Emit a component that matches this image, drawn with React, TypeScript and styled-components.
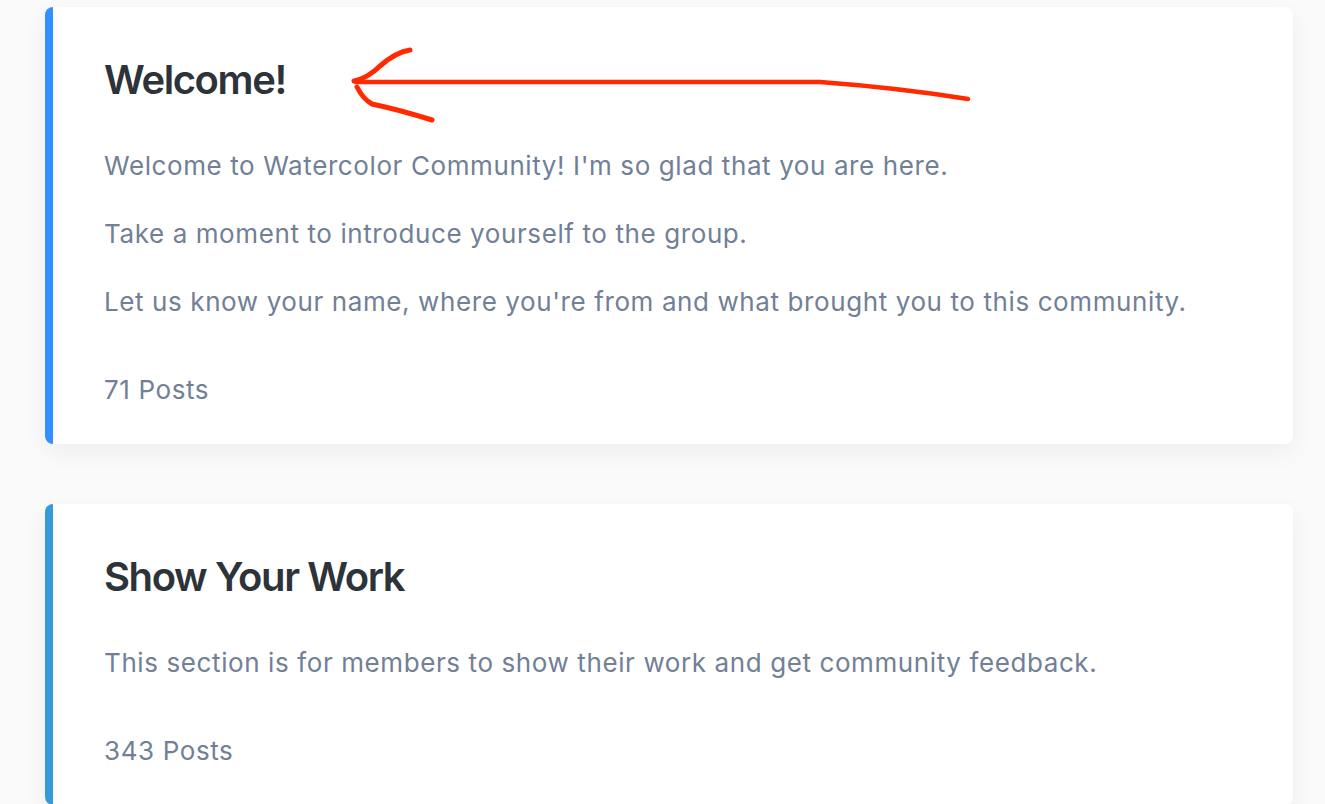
import styled, { createGlobalStyle } from 'styled-components';

const GlobalStyle = createGlobalStyle`
  body {
    margin: 0;
    background: #fafafa;
    font-family: Inter, 'Helvetica Neue', Arial, sans-serif;
  }
`;

const Page = styled.div`
  display: flex;
  flex-direction: column;
  gap: 60px;
  padding: 7px 32px 0 45px;
`;

const Card = styled.section<{ $accent: string }>`
  position: relative;
  background: #ffffff;
  border-left: 8px solid ${({ $accent }) => $accent};
  border-radius: 8px;
  box-shadow: 0 8px 24px rgba(0, 0, 0, 0.05);
  padding: 49px 40px 35px 51px;
`;

const Title = styled.h2`
  margin: 0 0 42px;
  font-size: 40px;
  line-height: 48px;
  font-weight: 600;
  color: #2d3339;
  letter-spacing: -1.4px;
`;

const Text = styled.p`
  margin: 0 0 29px;
  font-size: 26px;
  line-height: 39px;
  color: #718096;
  letter-spacing: 0.6px;
`;

const PostCount = styled.div`
  margin-top: 49px;
  font-size: 26px;
  line-height: 39px;
  color: #718096;
  letter-spacing: 0.6px;
`;

const Arrow = styled.svg`
  position: absolute;
  left: 0;
  top: 0;
  pointer-events: none;
  overflow: visible;
`;

type Category = {
  title: string;
  accent: string;
  lines: string[];
  posts: number;
};

const categories: Category[] = [
  {
    title: 'Welcome!',
    accent: '#3391ff',
    lines: [
      "Welcome to Watercolor Community! I'm so glad that you are here.",
      'Take a moment to introduce yourself to the group.',
      "Let us know your name, where you're from and what brought you to this community.",
    ],
    posts: 71,
  },
  {
    title: 'Show Your Work',
    accent: '#3599db',
    lines: ['This section is for members to show their work and get community feedback.'],
    posts: 343,
  },
];

// hand-drawn annotation pointing at the first title (card-local coords)
const AnnotationArrow = () => (
  <Arrow width="1" height="1" viewBox="0 0 1 1">
    <g
      transform="translate(-53 -7)"
      fill="none"
      stroke="#ff2a00"
      strokeWidth="5"
      strokeLinecap="round"
      strokeLinejoin="round"
    >
      <path d="M356 82 L820 82 Q900 88 968 99" strokeWidth="4.5" />
      <path d="M354 81 Q368 78 380 66 Q396 52 410 50" />
      <path d="M357 87 Q363 99 372 104 Q400 110 432 120" />
    </g>
  </Arrow>
);

export default function App() {
  return (
    <>
      <GlobalStyle />
      <Page>
        {categories.map((c, i) => (
          <Card key={c.title} $accent={c.accent}>
            {i === 0 && <AnnotationArrow />}
            <Title>{c.title}</Title>
            {c.lines.map((l) => (
              <Text key={l}>{l}</Text>
            ))}
            <PostCount>{c.posts} Posts</PostCount>
          </Card>
        ))}
      </Page>
    </>
  );
}
